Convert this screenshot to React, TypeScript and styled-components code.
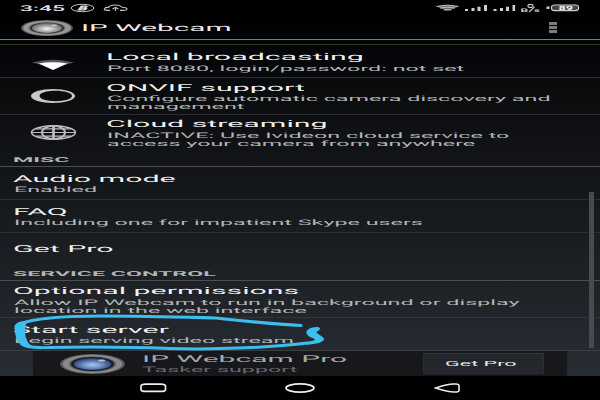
import React from "react";
import styled, { createGlobalStyle } from "styled-components";

const GlobalStyle = createGlobalStyle`
  html, body { margin: 0; padding: 0; background: #000; }
  body { width: 600px; height: 400px; overflow: hidden; }
`;

const Screen = styled.div`
  position: relative;
  width: 600px;
  height: 400px;
  display: flex;
  flex-direction: column;
  overflow: hidden;
  background: #000;
  color: #f2f2f2;
  font-family: Roboto, "Liberation Sans", sans-serif;
  text-rendering: geometricPrecision;
`;

/* Text on this display is much wider than it is tall. */
const Wide = styled.span<{ $x?: number; $dy?: number }>`
  display: block;
  width: max-content;
  white-space: pre;
  transform: translateY(${(p) => p.$dy ?? 0.6}px) scaleX(${(p) => p.$x ?? 3.2});
  transform-origin: 0 50%;
`;

const StatusBar = styled.div`
  height: 16px;
  box-sizing: border-box;
  padding: 0 20px;
  display: flex;
  justify-content: space-between;
  background: #000;
`;
const StatusGroup = styled.div`
  display: flex;
  align-items: flex-start;
`;
const Clock = styled(Wide)`
  font-size: 8px;
  line-height: 16px;
  font-weight: 500;
  color: #e4e4e4;
`;
const ClockBox = styled.div`
  width: 50px;
`;

const TitleBar = styled.div`
  height: 23px;
  display: flex;
  align-items: center;
  padding: 0 43px 0 21px;
  background: linear-gradient(#000, #030405);
`;
const AppIcon = styled.svg`
  flex: none;
`;
const AppTitle = styled(Wide)`
  margin-left: 8px;
  font-size: 9.6px;
  line-height: 12px;
  color: #ececec;
`;
const MenuDots = styled.div`
  margin-left: auto;
  display: grid;
  gap: 1px;
`;
const MenuDot = styled.i`
  width: 8px;
  height: 3px;
  background: #7c7e7d;
`;

const Content = styled.main`
  height: 337px;
  box-sizing: border-box;
  border-top: 1px solid #568bad;
  background: linear-gradient(#020407 0, #0a0b0d 14%, #15181b 45%, #1e2125 72%, #252a31 92%, #282c33 100%);
  display: flex;
  flex-direction: column;
`;
const Strip = styled.div`
  height: 5px;
  box-sizing: border-box;
  border-bottom: 1px solid #343329;
`;
const Row = styled.div<{ $h: number; $pad: number; $line?: string }>`
  height: ${(p) => p.$h}px;
  box-sizing: border-box;
  padding: ${(p) => p.$pad}px 0 0 13px;
  border-bottom: 1px solid ${(p) => p.$line ?? "#2b2d30"};
  display: flex;
`;
const IconCell = styled.div<{ $top: number; $left: number }>`
  width: 93px;
  box-sizing: border-box;
  padding: ${(p) => p.$top}px 0 0 ${(p) => p.$left}px;
`;
const RowText = styled.div`
  display: flex;
  flex-direction: column;
`;
const Title = styled(Wide)`
  font-size: 9.6px;
  line-height: 13px;
  color: #f0f0f0;
  margin-left: 0.4px;
`;
const Sub = styled(Wide)`
  font-size: 7.6px;
  line-height: 8.2px;
  color: #b4b5b7;
  margin-left: 0.7px;
`;
const Section = styled.div<{ $h: number; $pad: number }>`
  height: ${(p) => p.$h}px;
  box-sizing: border-box;
  padding: ${(p) => p.$pad}px 0 0 13px;
  border-bottom: 1px solid #4c4e51;
`;
const SectionLabel = styled(Wide)`
  font-size: 6.8px;
  line-height: 8px;
  font-weight: 700;
  color: #b3b4b6;
`;

const Promo = styled.div`
  height: 25px;
  margin: 0 33px;
  box-sizing: border-box;
  padding: 0 23px 0 27px;
  background: #16181c;
  display: flex;
  align-items: center;
`;
const PromoText = styled.div`
  width: 281px;
  margin-left: 17px;
`;
const PromoTitle = styled(Wide)`
  font-size: 9.4px;
  line-height: 12px;
  color: #a5a7aa;
`;
const PromoSub = styled(Wide)`
  font-size: 7.6px;
  line-height: 10px;
  color: #66696d;
`;
const PromoButton = styled.button`
  width: 121px;
  height: 21px;
  padding: 0 0 0 21px;
  border: 1px solid #2b2f34;
  border-top-color: #34383d;
  border-radius: 1px;
  background: #23272b;
  font: inherit;
  font-size: 8px;
  line-height: 12px;
  color: #ececec;
  text-align: left;
  flex: none;
  margin-left: auto;
`;

const NavBar = styled.nav`
  height: 24px;
  display: flex;
  justify-content: space-between;
  align-items: center;
  padding: 0 139px;
  background: #000;
`;

const Scrollbar = styled.div`
  position: absolute;
  left: 589px;
  top: 192px;
  width: 5px;
  height: 156px;
  background: #484a4e;
`;
const Marker = styled.svg`
  position: absolute;
  left: 0;
  top: 0;
  pointer-events: none;
`;

function Lens({ width, height, blue }: { width: number; height: number; blue?: boolean }) {
  const id = blue ? "lensBlue" : "lensGrey";
  return (
    <AppIcon width={width} height={height} viewBox="0 0 64 20" preserveAspectRatio="none">
      <defs>
        <radialGradient id={id} cx=".5" cy=".58" r=".55">
          <stop offset="0" stopColor={blue ? "#a8c6f0" : "#f4f4f4"} />
          <stop offset=".45" stopColor={blue ? "#6f90c8" : "#b5b5b5"} />
          <stop offset="1" stopColor={blue ? "#2a3d68" : "#666"} />
        </radialGradient>
      </defs>
      <ellipse cx="32" cy="10" rx="32" ry="10" fill={blue ? "#5c5a59" : "#5a5a5a"} />
      <ellipse cx="32" cy="10" rx="29.5" ry="9.2" fill={blue ? "#8b8786" : "#989898"} />
      <ellipse cx="32" cy="10" rx="23" ry="7.600" fill={blue ? "#555556" : "#777"} />
      <ellipse cx="32" cy="10" rx="21" ry="7" fill={blue ? "#111b32" : "#303030"} />
      <ellipse cx="32" cy="10" rx="18.5" ry="6.1" fill={`url(#${id})`} />
      <ellipse cx="41" cy="6.5" rx="3.500" ry="1" fill="#fff" opacity=".6" />
    </AppIcon>
  );
}

function StatusLeftIcons() {
  return (
    <svg width="58" height="16" viewBox="0 0 58 16" fill="none" stroke="#c4c4c4">
      <ellipse cx="12.5" cy="8" rx="11.3" ry="3.7" strokeWidth="1" />
      <path d="M7 10.500L11 5.400H16Q19.500 6 16.500 7.700Q19 8.700 14.500 10.500Z" fill="#ddd" stroke="none" />
      <path d="M12.500 7h2.500M11.500 9h2.500" stroke="#333" strokeWidth=".6" />
      <path d="M40 10.400H37Q33.500 10 34.500 8.500Q35.500 7.200 38.500 7.400Q40 5 45 5Q50.500 5 52 7.300Q57 7.500 57 9Q57 10.400 53 10.400H50" strokeWidth="1.100" />
      <path d="M45.500 11V8M42.500 9L45.500 7.500L48.500 9" strokeWidth="1.200" />
    </svg>
  );
}

function StatusRightIcons() {
  return (
    <svg width="144" height="16" viewBox="436 0 144 16">
      <path d="M436 6.300Q447.500 3.700 459 6.300L447.500 11.300Z" fill="#666" />
      <path d="M436.500 6.500Q447.500 3.700 458.500 6.500M440 8.100Q447.500 6.200 455 8.100M443.500 10Q447.500 8.700 451.500 10" fill="none" stroke="#ccc" strokeWidth=".9" />
      <g fill="#cfcfcf">
        <path d="M465 9h3v2h-3zM471.500 8h3v3h-3zM477.500 6.800h3v4.200h-3zM484 5h3v6h-3z" />
        <path d="M493.500 9h3v2h-3zM500 8h3v3h-3zM506 6.800h3v4.200h-3zM512.500 5h2.600v6h-2.600z" />
        <path d="M546.500 6.500h3v2.500h-3z" />
      </g>
      <g fill="none" stroke="#c8c8c8" strokeWidth="1.100">
        <ellipse cx="530.500" cy="5.900" rx="2.600" ry="1.500" />
        <path d="M534.500 7L529 12" />
      </g>
      <g fill="#c8c8c8" fontFamily="Roboto, sans-serif" fontSize="5" fontWeight="700">
        <text transform="translate(520.500 12) scale(2.400 1)">B</text>
        <text transform="translate(534 12) scale(2.200 1)">s</text>
      </g>
      <rect x="551.500" y="5" width="27" height="5.600" rx="3" ry="2" fill="#444" stroke="#cfcfcf" strokeWidth="1.100" />
      <text transform="translate(558.500 10.100) scale(2.200 1)" fontFamily="Roboto, sans-serif" fontSize="5.800" fontWeight="700" fill="#f5f5f5">89</text>
    </svg>
  );
}

const WifiIcon = () => (
  <svg width="42" height="12" viewBox="0 0 42 12">
    <path d="M0 3.500Q21 -2 42 3.500L34 5.500H8Z" fill="#56585a" />
    <path d="M6.500 4.500Q21 2 35.500 4.500L21 11Z" fill="#fff" />
  </svg>
);
const RingIcon = () => (
  <svg width="44" height="14" viewBox="0 0 44 14">
    <path fillRule="evenodd" fill="#c9c9c9" d="M22 0C34 0 44 3 44 7S34 14 22 14S0 11 0 7S10 0 22 0ZM24.500 1.800C15.500 1.800 8.500 4 8.500 7S15.500 12.200 24.500 12.200S41 10 41 7S33.500 1.800 24.500 1.800Z" />
  </svg>
);
const GlobeIcon = () => (
  <svg width="47" height="15" viewBox="0 0 47 15" fill="none" stroke="#b9babb">
    <ellipse cx="23.500" cy="7.500" rx="22" ry="6.700" strokeWidth="1.500" />
    <ellipse cx="23.500" cy="7.500" rx="11.500" ry="6.700" strokeWidth="2" />
    <path d="M23.500 .8V14.200" strokeWidth="2.800" />
    <path d="M1.500 7.500H45.500M6 3.900H41M6 11.100H41" strokeWidth="1.200" />
  </svg>
);

const TITLE_X = 3.16;
const SUB_X = 3.07;
const LABEL_X = 3.41;

export default function App() {
  return (
    <Screen>
      <GlobalStyle />
      <StatusBar>
        <StatusGroup>
          <ClockBox><Clock $x={2.86} $dy={1}>3:45</Clock></ClockBox>
          <StatusLeftIcons />
        </StatusGroup>
        <StatusRightIcons />
      </StatusBar>
      <TitleBar>
        <Lens width={52} height={16} />
        <AppTitle $x={3.1} $dy={1}>IP Webcam</AppTitle>
        <MenuDots><MenuDot /><MenuDot /><MenuDot /></MenuDots>
      </TitleBar>
      <Content>
        <Strip />
        <Row $h={33} $pad={6}>
          <IconCell $top={5} $left={19}><WifiIcon /></IconCell>
          <RowText>
            <Title $x={TITLE_X} $dy={0}>Local broadcasting</Title>
            <Sub $x={SUB_X}>Port 8080, login/password: not set</Sub>
          </RowText>
        </Row>
        <Row $h={37} $pad={3}>
          <IconCell $top={7} $left={18}><RingIcon /></IconCell>
          <RowText>
            <Title $x={TITLE_X}>ONVIF support</Title>
            <Sub $x={SUB_X}>Configure automatic camera discovery and</Sub>
            <Sub $x={SUB_X}>management</Sub>
          </RowText>
        </Row>
        <Row $h={37} $pad={3} $line="transparent">
          <IconCell $top={7} $left={17}><GlobeIcon /></IconCell>
          <RowText>
            <Title $x={TITLE_X} $dy={0}>Cloud streaming</Title>
            <Sub $x={SUB_X}>INACTIVE: Use Ivideon cloud service to</Sub>
            <Sub $x={SUB_X}>access your camera from anywhere</Sub>
          </RowText>
        </Row>
        <Section $h={15} $pad={3}><SectionLabel $x={LABEL_X} $dy={1}>MISC</SectionLabel></Section>
        <Row $h={33} $pad={6}>
          <RowText>
            <Title $x={TITLE_X} $dy={0}>Audio mode</Title>
            <Sub $x={SUB_X} $dy={0}>Enabled</Sub>
          </RowText>
        </Row>
        <Row $h={33} $pad={5}>
          <RowText>
            <Title $x={TITLE_X} $dy={1}>FAQ</Title>
            <Sub $x={SUB_X}>Including one for impatient Skype users</Sub>
          </RowText>
        </Row>
        <Row $h={33} $pad={9} $line="transparent">
          <Title $x={TITLE_X} $dy={1}>Get Pro</Title>
        </Row>
        <Section $h={15} $pad={3}><SectionLabel $x={LABEL_X} $dy={1}>SERVICE CONTROL</SectionLabel></Section>
        <Row $h={37} $pad={4} $line="#33363a">
          <RowText>
            <Title $x={TITLE_X} $dy={0}>Optional permissions</Title>
            <Sub $x={SUB_X}>Allow IP Webcam to run in background or display</Sub>
            <Sub $x={SUB_X}>location in the web interface</Sub>
          </RowText>
        </Row>
        <Row $h={33} $pad={5} $line="#3b3f45">
          <RowText>
            <Title $x={TITLE_X} $dy={1}>Start server</Title>
            <Sub $x={SUB_X}>Begin serving video stream</Sub>
          </RowText>
        </Row>
        <Promo>
          <Lens width={65} height={20} blue />
          <PromoText>
            <PromoTitle $x={3.2} $dy={1}>IP Webcam Pro</PromoTitle>
            <PromoSub $x={SUB_X} $dy={0}>Tasker support</PromoSub>
          </PromoText>
          <PromoButton><Wide $x={2.7} $dy={0}>Get Pro</Wide></PromoButton>
        </Promo>
      </Content>
      <NavBar>
        <svg width="29" height="10" viewBox="0 0 29 10"><rect x="2" y="1.200" width="24.500" height="7.200" rx="5" ry="2" fill="none" stroke="#eee" strokeWidth="1.700" /></svg>
        <svg width="32" height="10" viewBox="0 0 32 10"><ellipse cx="15" cy="5" rx="14" ry="4.100" fill="none" stroke="#eee" strokeWidth="1.700" /></svg>
        <svg width="27" height="10" viewBox="0 0 27 10"><path d="M1.500 5Q14 .8 20 1Q25 .8 25 2.500V7.500Q25 9.200 20 9Q14 9 1.500 5Z" fill="none" stroke="#eee" strokeWidth="1.600" /></svg>
      </NavBar>
      <Scrollbar />
      <Marker width="600" height="400" viewBox="0 0 600 400" fill="none" stroke="#3cbfee" strokeLinecap="round" strokeLinejoin="round">
        <path d="M19 324C34 318.500 65 316 100 316C150 316 195 317.500 215 318C245 321 270 324 301 325.500" strokeWidth="3.200" />
        <path d="M28 346.500Q36 348 50 347.500C90 346.500 130 347 170 348.500C220 350 275 347 308 343" strokeWidth="3" />
        <g fill="#3cbfee" stroke="none">
          <path d="M14.500 326Q16 322.500 21 321.500L28 321.500Q24.500 326 25.500 330Q24.500 338 28 342.500Q30 345 32 345.500V348Q25 348.500 20.500 345Q14 337 14.500 326Z" />
          <path d="M306.500 344.500L309 341.500Q315 340.500 315 339.500Q314 338.500 309 336.500Q304.500 333 307.500 330Q310 327.500 314 327.200Q319.500 326.500 320 328.500Q320 330.500 316.500 331.800Q316 333 319 334.500Q325 338 324 340Q321 343.500 310 344.500Z" />
        </g>
      </Marker>
    </Screen>
  );
}
